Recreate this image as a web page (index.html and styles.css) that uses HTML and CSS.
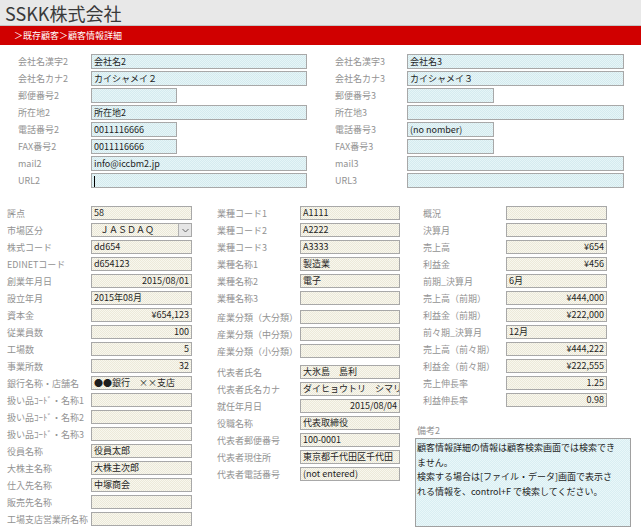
FILE: index.html
```html
<!DOCTYPE html>
<html lang="ja">
<head>
<meta charset="utf-8">
<title>SSKK株式会社 顧客情報詳細</title>
<link rel="stylesheet" href="styles.css">
</head>
<body>
<div class="hdr"><h1>SSKK株式会社</h1></div>
<div class="crumb">＞既存顧客＞顧客情報詳細</div>

<div class="top">
  <div class="col left">
    <div class="row"><span class="lbl">会社名漢字2</span><span class="fld cy wide">会社名2</span></div>
    <div class="row"><span class="lbl">会社名カナ2</span><span class="fld cy wide">カイシャメイ２</span></div>
    <div class="row"><span class="lbl">郵便番号2</span><span class="fld cy narrow"></span></div>
    <div class="row"><span class="lbl">所在地2</span><span class="fld cy wide">所在地2</span></div>
    <div class="row"><span class="lbl">電話番号2</span><span class="fld cy narrow">0011116666</span></div>
    <div class="row"><span class="lbl">FAX番号2</span><span class="fld cy narrow">0011116666</span></div>
    <div class="row"><span class="lbl">mail2</span><span class="fld cy wide">info@iccbm2.jp</span></div>
    <div class="row"><span class="lbl">URL2</span><span class="fld cy wide"><span class="caret"></span></span></div>
  </div>
  <div class="col right">
    <div class="row"><span class="lbl">会社名漢字3</span><span class="fld cy wide">会社名3</span></div>
    <div class="row"><span class="lbl">会社名カナ3</span><span class="fld cy wide">カイシャメイ３</span></div>
    <div class="row"><span class="lbl">郵便番号3</span><span class="fld cy narrow"></span></div>
    <div class="row"><span class="lbl">所在地3</span><span class="fld cy wide"></span></div>
    <div class="row"><span class="lbl">電話番号3</span><span class="fld cy narrow">(no nomber)</span></div>
    <div class="row"><span class="lbl">FAX番号3</span><span class="fld cy narrow"></span></div>
    <div class="row"><span class="lbl">mail3</span><span class="fld cy wide"></span></div>
    <div class="row"><span class="lbl">URL3</span><span class="fld cy wide"></span></div>
  </div>
</div>

<div class="bottom">
  <div class="bcol c1">
    <div class="brow"><span class="lbl">評点</span><span class="fld cr">58</span></div>
    <div class="brow"><span class="lbl">市場区分</span><span class="fld cr sel"><span class="seltxt">ＪＡＳＤＡＱ</span><span class="arrow"><svg width="7" height="5" viewBox="0 0 7 5"><path d="M0.5 1 L3.5 4 L6.5 1" fill="none" stroke="#666" stroke-width="1"/></svg></span></span></div>
    <div class="brow"><span class="lbl">株式コード</span><span class="fld cr">dd654</span></div>
    <div class="brow"><span class="lbl">EDINETコード</span><span class="fld cr">d654123</span></div>
    <div class="brow"><span class="lbl">創業年月日</span><span class="fld cr num">2015/08/01</span></div>
    <div class="brow"><span class="lbl">設立年月</span><span class="fld cr">2015年08月</span></div>
    <div class="brow"><span class="lbl">資本金</span><span class="fld cr num">¥654,123</span></div>
    <div class="brow"><span class="lbl">従業員数</span><span class="fld cr num">100</span></div>
    <div class="brow"><span class="lbl">工場数</span><span class="fld cr num">5</span></div>
    <div class="brow"><span class="lbl">事業所数</span><span class="fld cr num">32</span></div>
    <div class="brow"><span class="lbl">銀行名称・店舗名</span><span class="fld cr">●●銀行　××支店</span></div>
    <div class="brow"><span class="lbl">扱い品ｺｰﾄﾞ・名称1</span><span class="fld cr"></span></div>
    <div class="brow"><span class="lbl">扱い品ｺｰﾄﾞ・名称2</span><span class="fld cr"></span></div>
    <div class="brow"><span class="lbl">扱い品ｺｰﾄﾞ・名称3</span><span class="fld cr"></span></div>
    <div class="brow"><span class="lbl">役員名称</span><span class="fld cr">役員太郎</span></div>
    <div class="brow"><span class="lbl">大株主名称</span><span class="fld cr">大株主次郎</span></div>
    <div class="brow"><span class="lbl">仕入先名称</span><span class="fld cr">中塚商会</span></div>
    <div class="brow"><span class="lbl">販売先名称</span><span class="fld cr"></span></div>
    <div class="brow"><span class="lbl">工場支店営業所名称</span><span class="fld cr"></span></div>
  </div>

  <div class="bcol c2">
    <div class="brow"><span class="lbl">業種コード1</span><span class="fld cr">A1111</span></div>
    <div class="brow"><span class="lbl">業種コード2</span><span class="fld cr">A2222</span></div>
    <div class="brow"><span class="lbl">業種コード3</span><span class="fld cr">A3333</span></div>
    <div class="brow"><span class="lbl">業種名称1</span><span class="fld cr">製造業</span></div>
    <div class="brow"><span class="lbl">業種名称2</span><span class="fld cr">電子</span></div>
    <div class="brow"><span class="lbl">業種名称3</span><span class="fld cr"></span></div>
    <div class="brow gap2"><span class="lbl">産業分類（大分類）</span><span class="fld cr"></span></div>
    <div class="brow"><span class="lbl">産業分類（中分類）</span><span class="fld cr"></span></div>
    <div class="brow"><span class="lbl">産業分類（小分類）</span><span class="fld cr"></span></div>
    <div class="brow gap4"><span class="lbl">代表者氏名</span><span class="fld cr">大氷島　島利</span></div>
    <div class="brow"><span class="lbl">代表者氏名カナ</span><span class="fld cr">ダイヒョウトリ　シマリ</span></div>
    <div class="brow"><span class="lbl">就任年月日</span><span class="fld cr num">2015/08/04</span></div>
    <div class="brow"><span class="lbl">役職名称</span><span class="fld cr">代表取締役</span></div>
    <div class="brow"><span class="lbl">代表者郵便番号</span><span class="fld cr">100-0001</span></div>
    <div class="brow"><span class="lbl">代表者現住所</span><span class="fld cr">東京都千代田区千代田</span></div>
    <div class="brow"><span class="lbl">代表者電話番号</span><span class="fld cr">(not entered)</span></div>
  </div>

  <div class="bcol c3">
    <div class="rows3">
      <div class="brow"><span class="lbl">概況</span><span class="fld cr"></span></div>
      <div class="brow"><span class="lbl">決算月</span><span class="fld cr"></span></div>
      <div class="brow"><span class="lbl">売上高</span><span class="fld cr num">¥654</span></div>
      <div class="brow"><span class="lbl">利益金</span><span class="fld cr num">¥456</span></div>
      <div class="brow"><span class="lbl">前期_決算月</span><span class="fld cr">6月</span></div>
      <div class="brow"><span class="lbl">売上高（前期）</span><span class="fld cr num">¥444,000</span></div>
      <div class="brow"><span class="lbl">利益金（前期）</span><span class="fld cr num">¥222,000</span></div>
      <div class="brow"><span class="lbl">前々期_決算月</span><span class="fld cr">12月</span></div>
      <div class="brow"><span class="lbl">売上高（前々期）</span><span class="fld cr num">¥444,222</span></div>
      <div class="brow"><span class="lbl">利益金（前々期）</span><span class="fld cr num">¥222,555</span></div>
      <div class="brow"><span class="lbl">売上伸長率</span><span class="fld cr num">1.25</span></div>
      <div class="brow"><span class="lbl">利益伸長率</span><span class="fld cr num">0.98</span></div>
    </div>
    <div class="memo-lbl">備考2</div>
    <div class="memo">
      <span class="ln">顧客情報詳細の情報は顧客検索画面では検索でき</span>
      <span class="ln">ません。</span>
      <span class="ln">検索する場合は[ファイル・データ]画面で表示さ</span>
      <span class="ln">れる情報を、control+F で検索してください。</span>
    </div>
  </div>
</div>
</body>
</html>
```

FILE: styles.css
```css
html, body {
  margin: 0;
  padding: 0;
}
body {
  width: 641px;
  height: 530px;
  overflow: hidden;
  background: #fff;
  font-family: "Noto Sans CJK JP", "Noto Sans", sans-serif;
  font-size: 9px;
  color: #222;
}

.hdr {
  height: 25px;
  background: #e8e8e8;
  border-bottom: 1px solid #c4c4c4;
  padding-left: 5px;
  display: flex;
  align-items: center;
}
.hdr h1 {
  margin: 0;
  font-size: 18px;
  font-weight: normal;
  color: #3a3a3a;
  line-height: 1;
}

.crumb {
  height: 19px;
  background: #d00000;
  color: #fff;
  padding-left: 14px;
  display: flex;
  align-items: center;
  font-size: 9px;
}

.lbl {
  color: #929292;
  white-space: nowrap;
  flex: none;
}

.fld {
  box-sizing: border-box;
  display: block;
  flex: none;
  border: 1px solid #a8a8a8;
  padding: 0 2px;
  white-space: nowrap;
  overflow: hidden;
  color: #1e1e1e;
}
.cy {
  background-color: #dff1f4;
  background-image: repeating-conic-gradient(#e6f5f7 0 25%, #d5ebef 0 50%);
  background-size: 2px 2px;
}
.cr {
  background-color: #f4f2e6;
  background-image: repeating-conic-gradient(#f8f7ee 0 25%, #ece9d9 0 50%);
  background-size: 2px 2px;
}
.num {
  text-align: right;
}

/* top section */
.top {
  display: flex;
  padding: 9px 0 0 18px;
}
.col {
  display: flex;
  flex-direction: column;
  gap: 2px;
}
.col.left {
  width: 317px;
}
.row {
  display: flex;
  align-items: center;
  height: 15px;
}
.top .fld {
  height: 15px;
  line-height: 13px;
}
.left .lbl { width: 73px; }
.right .lbl { width: 72px; }
.left .wide { width: 216px; }
.left .narrow { width: 86px; }
.right .wide { width: 217px; }
.right .narrow { width: 87px; }

.caret {
  display: inline-block;
  width: 1px;
  height: 11px;
  background: #000;
  vertical-align: middle;
}

/* bottom section */
.bottom {
  display: flex;
  padding-top: 18px;
}
.bcol, .rows3 {
  display: flex;
  flex-direction: column;
  gap: 3px;
}
.rows3 {
  padding-left: 8px;
}
.c1 { margin-left: 7px; }
.c2 { margin-left: 25px; }
.c3 { margin-left: 15px; gap: 0; }

.brow {
  display: flex;
  align-items: center;
  height: 14px;
}
.bottom .fld {
  height: 14px;
  line-height: 12px;
}
.c1 .lbl { width: 84px; }
.c1 .fld { width: 101px; }
.c2 .lbl { width: 83px; }
.c2 .fld { width: 100px; }
.c3 .lbl { width: 83px; }
.c3 .fld { width: 101px; }
.gap2 { margin-top: 2px; }
.gap4 { margin-top: 4px; }

.sel {
  display: flex;
  padding-right: 0;
}
.seltxt {
  flex: 1;
  padding-left: 6px;
}
.arrow {
  width: 13px;
  height: 12px;
  box-sizing: border-box;
  border-left: 1px solid #b0b0b0;
  background: #e6e6e6;
  display: flex;
  align-items: center;
  justify-content: center;
}

.memo-lbl {
  margin-top: 18px;
  height: 12px;
  line-height: 12px;
  padding-left: 2px;
  color: #929292;
}
.memo {
  margin-top: 1px;
  box-sizing: border-box;
  width: 216px;
  height: 89px;
  border: 1px solid #a0a0a0;
  padding: 2px 1px;
  line-height: 14.5px;
  color: #1e1e1e;
  background-color: #e2f3f6;
  background-image: repeating-conic-gradient(#e9f7f9 0 25%, #d9eef2 0 50%);
  background-size: 2px 2px;
  overflow: hidden;
}
.ln {
  display: block;
  white-space: nowrap;
}
```
